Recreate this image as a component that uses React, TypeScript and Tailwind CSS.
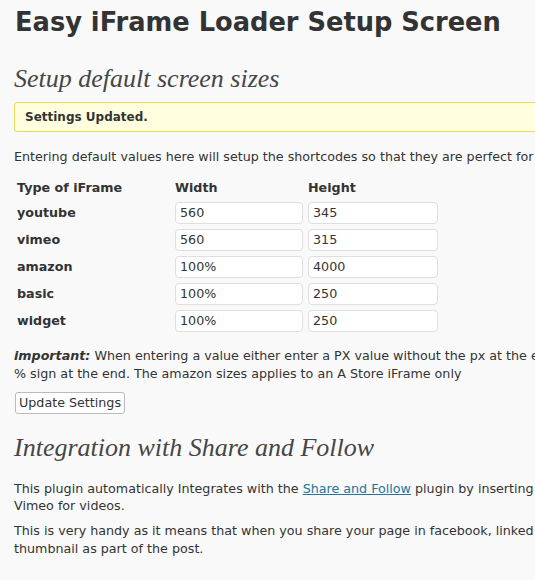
import React from "react";

const rows = [
  ["youtube", "560", "345"],
  ["vimeo", "560", "315"],
  ["amazon", "100%", "4000"],
  ["basic", "100%", "250"],
  ["widget", "100%", "250"],
];

export default function App() {
  return (
    <div className="w-[535px] h-[580px] overflow-hidden bg-[#f9f9f9] text-[#333] font-['DejaVu_Sans',sans-serif] text-[12.7px]">
      <div className="pl-[14px] w-[700px] whitespace-nowrap">
        <h1 className="pt-[4px] text-[25.7px] font-bold leading-[36px] pl-[1px]">Easy iFrame Loader Setup Screen</h1>
        <h2 className="mt-[24px] font-['Liberation_Serif',serif] italic text-[26px] leading-[30px] text-[#464646]">
          Setup default screen sizes
        </h2>
        <div className="mt-[8px] h-[30px] border border-[#e6db55] bg-[#ffffe0] rounded-l-[3px] pl-[10px] flex items-center font-bold text-[12px]">
          Settings Updated.
        </div>
        <p className="mt-[16px] leading-[18px]">
          Entering default values here will setup the shortcodes so that they are perfect for your site.
        </p>
        <table className="mt-[11px] border-separate border-spacing-0">
          <tbody>
            <tr className="h-[22px] font-bold">
              <td className="w-[161px] pl-[3px]">Type of iFrame</td>
              <td className="w-[133px] pl-[0px]">Width</td>
              <td className="pl-[0px]">Height</td>
            </tr>
            {rows.map(([n, w, h]) => (
              <tr key={n} className="h-[27px]">
                <td className="pl-[3px] font-bold">{n}</td>
                <td>
                  <input
                    readOnly
                    value={w}
                    className="block w-[128px] h-[22px] border border-[#dfdfdf] rounded-[4px] bg-white px-[4px] text-[12.7px] text-[#333] outline-none"
                  />
                </td>
                <td>
                  <input
                    readOnly
                    value={h}
                    className="block w-[130px] h-[22px] border border-[#dfdfdf] rounded-[4px] bg-white px-[4px] text-[12.7px] text-[#333] outline-none"
                  />
                </td>
              </tr>
            ))}
          </tbody>
        </table>
        <p className="mt-[13px] leading-[18px]">
          <b><i>important:</i></b> When entering a value either enter a PX value without the px at the end or a
          <br />% sign at the end. The amazon sizes applies to an A Store iFrame only
        </p>
        <button className="mt-[9px] ml-[1px] h-[22px] w-[110px] border border-[#bbb] rounded-[3px] bg-white text-[12.7px] text-[#333] leading-[20px]">
          Update Settings
        </button>
        <h2 className="mt-[19px] font-['Liberation_Serif',serif] italic text-[26px] leading-[30px] text-[#464646]">
          Integration with Share and Follow
        </h2>
        <p className="mt-[17px] leading-[17px]">
          This plugin automatically Integrates with the{" "}
          <a className="text-[#21759b] underline">Share and Follow</a> plugin by inserting a thumbnail from YouTube or
          <br />Vimeo for videos.
        </p>
        <p className="mt-[8px] leading-[18px]">
          This is very handy as it means that when you share your page in facebook, linked in etc it shows a video
          <br />thumbnail as part of the post.
        </p>
      </div>
    </div>
  );
}
